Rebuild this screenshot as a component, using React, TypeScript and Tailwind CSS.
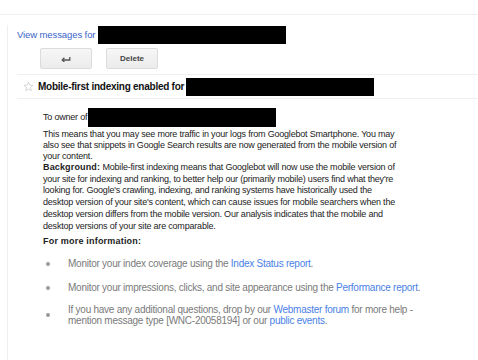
import React from "react";

function BackArrow() {
  return (
    <svg width="10" height="6" viewBox="0 0 10 6" fill="none" stroke="#555" strokeWidth="1.3">
      <path d="M1.2 4 H8.8 V1" />
      <path d="M3.4 1.8 L1.2 4 L3.4 6" />
    </svg>
  );
}

function Star() {
  return (
    <svg width="11" height="11" viewBox="0 0 24 24" fill="none" stroke="#c8c8c8" strokeWidth="1.6">
      <path d="M12 2.5l2.9 6.3 6.9.7-5.2 4.6 1.5 6.8L12 17.4 5.9 20.9l1.5-6.8L2.2 9.5l6.9-.7z" />
    </svg>
  );
}

function Redacted({ w, h = 18 }: { w: number; h?: number }) {
  return <span className="inline-block bg-black align-middle shrink-0" style={{ width: w, height: h }} />;
}

const link = "text-[#4a7fe6]";
const dot = "w-[4px] h-[4px] rounded-full bg-[#999] ml-[3px] mr-[18px] shrink-0";

export default function App() {
  return (
    <div className="w-[478px] h-[360px] bg-white overflow-hidden font-['Liberation_Sans',Arial,sans-serif] text-[#222]">
      <div className="h-[15px] border-b border-[#eeeef3]" />
      <div className="ml-[7px] h-[338px] border-l border-[#eeeef3] pl-[9px]">
        {/* header link */}
        <div className="flex items-center h-[20px] mt-[10px] text-[9.5px] tracking-[-0.1px] text-[#3b64c8]">
          <span className="mr-[3px]">View messages for</span>
          <Redacted w={188} />
        </div>

        {/* buttons */}
        <div className="flex gap-[14px] ml-[23px] mt-[3px]">
          <button className="w-[52px] h-[21px] flex items-center justify-center rounded-[2px] border border-[#dcdcdc] bg-gradient-to-b from-[#f6f6f6] to-[#ececec]">
            <BackArrow />
          </button>
          <button className="w-[52px] h-[21px] flex items-center justify-center rounded-[2px] border border-[#dcdcdc] bg-gradient-to-b from-[#f6f6f6] to-[#ececec] text-[8px] font-bold text-[#444]">
            Delete
          </button>
        </div>

        {/* subject */}
        <div className="mt-[5px] h-[25px] border-y border-[#eeeef3] flex items-center pl-[6px]">
          <Star />
          <span className="ml-[4px] mr-[2px] text-[10px] tracking-[-0.25px] font-bold text-[#111]">
            Mobile-first indexing enabled for
          </span>
          <Redacted w={188} />
        </div>

        {/* body */}
        <div className="pl-[26px] pt-[9px] text-[9px] tracking-[-0.2px] leading-[11.7px]">
          <div className="flex items-center h-[19px]">
            <span className="mr-[1px]">To owner of</span>
            <Redacted w={188} h={19} />
          </div>
          <p className="mt-[2px] leading-[11px]">
            This means that you may see more traffic in your logs from Googlebot Smartphone. You may
            <br />
            also see that snippets in Google Search results are now generated from the mobile version of
            <br />
            your content.
          </p>
          <p>
            <b className="tracking-[0.15px]">Background:</b> Mobile-first indexing means that Googlebot will now use
            the mobile version of
            <br />
            your site for indexing and ranking, to better help our (primarily mobile) users find what they're
            <br />
            looking for. Google's crawling, indexing, and ranking systems have historically used the
            <br />
            desktop version of your site's content, which can cause issues for mobile searchers when the
            <br />
            desktop version differs from the mobile version. Our analysis indicates that the mobile and
            <br />
            desktop versions of your site are comparable.
          </p>
          <p className="mt-[3.5px] font-bold tracking-[0.2px]">For more information:</p>

          <ul className="mt-[11px] text-[10px] tracking-[-0.25px] text-[#7a7a7a]">
            <li className="flex items-center">
              <span className={dot} />
              <span>
                Monitor your index coverage using the <span className={link}>Index Status report</span>.
              </span>
            </li>
            <li className="flex items-center mt-[11.7px]">
              <span className={dot} />
              <span>
                Monitor your impressions, clicks, and site appearance using the{" "}
                <span className={link}>Performance report</span>.
              </span>
            </li>
            <li className="flex items-center mt-[10px]">
              <span className={dot} />
              <span>
                If you have any additional questions, drop by our <span className={link}>Webmaster forum</span> for
                more help -
                <br />
                mention message type [WNC-20058194] or our <span className={link}>public events</span>.
              </span>
            </li>
          </ul>
        </div>
      </div>
    </div>
  );
}
